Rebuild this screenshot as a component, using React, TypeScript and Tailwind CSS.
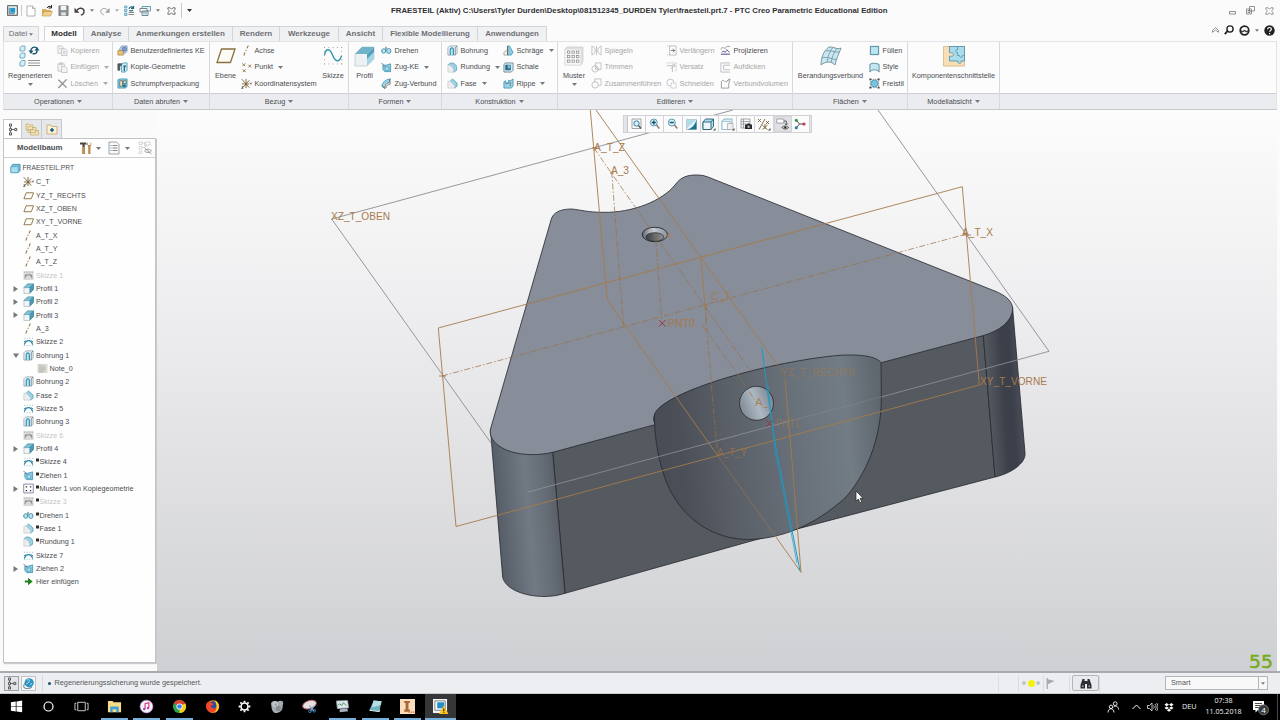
import React from "react";

const BLUE = "#2f8fb0";
const PALE = "#b9dfec";
const GREY = "#a9abae";

// small ribbon and tree glyphs, all on a 12x12 grid
const glyphs: Record<string, React.ReactNode> = {
  copy: (
    <g fill="#f4f4f4" stroke="#b9babd" strokeWidth=".8">
      <path d="M1 1h4l2 2v6H1z" />
      <path d="M5 4h4l2 2v5.500H5z" />
      <path d="M6.500 7h3M6.500 9h3M2.500 4h2" />
    </g>
  ),
  paste: (
    <g fill="#f4f4f4" stroke="#b9babd" strokeWidth=".8">
      <path d="M1 2h7v8H1zM3 .8h3V3H3z" />
      <path d="M5 5h4l2 2v4.500H5z" />
    </g>
  ),
  del: <path d="M1.500 2l9 8.500M10.500 1.500L1.500 11" stroke="#8f9193" strokeWidth="1.500" fill="none" />,
  udf: (
    <g strokeWidth=".7">
      <path d="M3 4l2-3h6v6l-2 2H3z" fill="#c4d4ea" stroke="#5f7fae" />
      <path d="M1 6h6v5H1z" fill="#e9c078" stroke="#a77d33" />
      <circle cx="8" cy="4.500" r="2.300" fill="#7f9fce" stroke="#46689b" />
    </g>
  ),
  copygeo: (
    <g strokeWidth=".8">
      <path d="M1 2h5v2H3v5H1z" fill="#555f66" stroke="#444" />
      <path d="M5 3l2-2h4v8l-2 2H5z" fill="#cfeaf4" stroke={BLUE} />
      <path d="M7 4.500h3M8 4.500V10" stroke="#17607e" strokeWidth="1.300" />
    </g>
  ),
  shrink: (
    <g strokeWidth=".8">
      <path d="M1 2l2-1h8v8l-1.500 2H1z" fill="#8fc9de" stroke={BLUE} />
      <path d="M3 3h3v6H3zM7 3h3v3H7z" fill="#f1e3b5" stroke="#4b6470" />
      <circle cx="8" cy="8.500" r="1.700" fill="#1f6f91" />
    </g>
  ),
  axis: <path d="M3 11.500l1.500-3.500M5.200 6.400l.5-1.200M6.500 3.700L8 .5" stroke="#8b6f3e" strokeWidth="1.100" fill="none" />,
  point: (
    <path
      d="M1.500 1.500l3 3M4.500 1.500l-3 3M8 3l3 3M11 3L8 6M2 8l3 3M5 8l-3 3"
      stroke="#8b6f3e"
      strokeWidth="1"
      fill="none"
    />
  ),
  csys: (
    <g stroke="#7a6338" strokeWidth="1" fill="none">
      <path d="M5.500 1v10M2 2.500l7 8M9 2.500l-7 8M1 6.500h8" />
      <path d="M.5 1l1.500 1.500M10 5l1.500 2M11.500 5L10 7M.5 9.500h2L.5 11.500h2" stroke="#3b3b3b" strokeWidth=".7" />
    </g>
  ),
  planeS: <path d="M3.500 3h8L9 9.500H1z" fill="#fdfbf5" stroke="#8b7443" strokeWidth="1" />,
  revolve: (
    <g stroke={BLUE} strokeWidth=".9">
      <path d="M0 6.500h12" strokeDasharray="2 1" />
      <ellipse cx="3" cy="6.500" rx="2.200" ry="2.500" fill={PALE} />
      <ellipse cx="8.500" cy="6.500" rx="2.300" ry="2.800" fill={PALE} />
      <path d="M5.500 2v3" stroke="#333" />
    </g>
  ),
  sweep: (
    <g strokeWidth=".8">
      <path d="M2 3.500h3.500L10.500 2v8.500H4L2 8z" fill="#8fcbe0" stroke={BLUE} />
      <path d="M4.500 5.500h4v3.500h-4z" fill="#b9e0ee" stroke="#4a9dbb" />
      <path d="M.5 1l4 4" stroke="#555" />
    </g>
  ),
  blend: (
    <g strokeWidth=".8">
      <path d="M1 9C2 4 5 1.500 10.500 1L9 5C6 5 4.500 7.500 4 11.500z" fill="#9fd3e5" stroke={BLUE} />
      <path d="M1 8l3 3.500M9 1.500L10 5" stroke="#555" />
      <path d="M4 10c1-3.500 3-5 6-5v2C7 7 6 9 5.500 11z" fill="#e3e6e8" stroke="#777" />
    </g>
  ),
  hole: (
    <g strokeWidth=".8">
      <path d="M1 3l2-2h8v8l-2 2H1z" fill="#eef6f9" stroke="#8298a2" />
      <path d="M3.500 11V5c0-2.500 3.500-2.500 3.500 0v6" fill={PALE} stroke={BLUE} strokeWidth="1.200" />
      <path d="M9 3v8M9 3l2-2" stroke="#58707b" />
    </g>
  ),
  round: (
    <g strokeWidth=".8">
      <path d="M1 3l3-2c4 0 6.500 2 6.500 5v3L7.500 11 7 8C6.500 5 4 3.500 1 3z" fill="#9ad1e4" stroke="#4a9dbb" />
      <path d="M1 3c3 .5 5.500 2 6 5l.5 3H1z" fill="#eceeef" stroke="#c6c8ca" />
    </g>
  ),
  chamfer: (
    <g strokeWidth=".8">
      <path d="M3.500 3.500L6 1l5 4.500v3.500L8 11z" fill="#9ad1e4" stroke="#4a9dbb" />
      <path d="M1 3.500h2.500L8 8v3H1z" fill="#eceeef" stroke="#c6c8ca" />
    </g>
  ),
  draft: (
    <g strokeWidth=".8">
      <path d="M5 1h2l4 7-2 3H5z" fill="#8fcbe0" stroke={BLUE} />
      <path d="M1 8l4-3v6H1z" fill="#eceeef" stroke="#999" />
      <path d="M5 1v10" stroke="#555" />
    </g>
  ),
  shell: (
    <g strokeWidth=".8">
      <path d="M1 3l1.500-2H11v8l-2 2H1z" fill="#cfeaf4" stroke="#58707b" />
      <path d="M3 3.500h5v5H3z" fill="#1f6f91" stroke="#17506a" />
      <path d="M5 3.500h3V7H5z" fill="#7fb9cf" stroke="none" />
    </g>
  ),
  rib: (
    <g strokeWidth=".8">
      <path d="M1 4l2-1v3l3-1V2.500l2 .5 3-2v7.500L9 11H1z" fill="#9ad1e4" stroke={BLUE} />
      <path d="M3 6l5-1v4" fill="none" stroke="#58707b" />
    </g>
  ),
  mirror: (
    <g fill="none" stroke="#b9babd" strokeWidth=".9">
      <path d="M1 1l3.500 3v4L1 11zM11 1L7.500 4v4l3.500 3zM6 1v10" />
    </g>
  ),
  trim: (
    <g fill="none" stroke="#b9babd" strokeWidth=".9">
      <path d="M5 1h6v7H5z" />
      <circle cx="4.500" cy="7.500" r="3.500" />
      <path d="M4 4l5 5" />
    </g>
  ),
  merge: (
    <g fill="none" stroke="#b9babd" strokeWidth=".9">
      <path d="M4 5V1h7v7H8" />
      <circle cx="4.500" cy="7.500" r="3.500" />
    </g>
  ),
  cut: (
    <g fill="none" stroke="#b9babd" strokeWidth=".9">
      <circle cx="4.800" cy="5" r="3.800" />
      <path d="M5.500 5.500H11V11H5.500z" fill="#fcfcfc" strokeDasharray="1.500 .8" />
    </g>
  ),
  extend: (
    <g fill="none" stroke="#b4b5b8" strokeWidth=".9">
      <path d="M4 1h7v10H4z" />
      <path d="M1 1h3M1 11h3" strokeDasharray="1 1" />
      <path d="M5.500 6h4M7.500 4l2 2-2 2" stroke="#666" />
    </g>
  ),
  offset: (
    <g fill="none" stroke="#b4b5b8" strokeWidth=".9">
      <path d="M1 1h10v10" strokeDasharray="1.500 1" />
      <path d="M1 4h6v7M5 7.500L9.500 3M7 3h2.500v2.500" />
    </g>
  ),
  project: (
    <g fill="none">
      <path d="M1 5c2-5 3 0 5-2s3-2 5-1" stroke="#888" strokeWidth=".9" />
      <path d="M1 10h10M2 8c2-3 3 1 4.500-1S9 6 10 8" stroke="#43347c" strokeWidth="1" />
      <path d="M6 4l3 3" stroke="#666" strokeWidth=".7" />
    </g>
  ),
  thicken: (
    <g fill="none" stroke="#b4b5b8" strokeWidth=".9">
      <path d="M11 1H1v10h10M11 3.500H4v5h7" />
    </g>
  ),
  solidify: (
    <g fill="none" stroke="#8f9194" strokeWidth=".9">
      <path d="M1.500 4C3 .5 5 5 7 4s2-3 4-2.500L9.500 6v5h-8z" />
      <path d="M7 4l3.500-3" />
    </g>
  ),
  fill: (
    <g>
      <path d="M1.500 1.500h9v9h-9z" fill="#a5dcec" stroke="#4b7f92" strokeWidth="1" />
      <path d="M3.500 2v8M5.500 2v8M7.500 2v8M2 4h8M2 6h8M2 8h8" stroke="#d8f2f9" strokeWidth=".5" />
    </g>
  ),
  style: <path d="M1 2.500c3-2 7-1 10 0V11C9.500 9 8.500 8.500 6 8.500S2.500 9 1 11z" fill="#c5e6f1" stroke="#4b7f92" strokeWidth=".9" />,
  freestyle: (
    <g>
      <path d="M1.500 1.500h9v9h-9z" fill="none" stroke="#555" strokeWidth=".7" strokeDasharray="1.500 1" />
      <circle cx="6" cy="6" r="3.800" fill="#7cc4dc" stroke={BLUE} strokeWidth=".8" />
      <path d="M.5.5h2v2h-2zM9.500.5h2v2h-2zM.5 9.500h2v2h-2zM9.500 9.500h2v2h-2z" fill="#444" />
    </g>
  ),
  part: (
    <g strokeWidth=".8">
      <path d="M1 4l2-2.500h8v6.500L9 10.500H1z" fill="#72c1dd" stroke="#2a7e9f" />
      <path d="M1 4h8v6.500H1z" fill="#a9deee" stroke="#5aa9c6" />
    </g>
  ),
  sketch: (
    <g>
      <path d="M1.500 9.500C3 3.500 9 3.500 10.500 9.500" fill="none" stroke="#2b86a8" strokeWidth="1.400" />
      <path d="M1 2.500h1M4 2.500h1M7 2.500h1M10 2.500h1M1 10.500h1M4 10.500h1M7 10.500h1M10 10.500h1" stroke="#7fb4c8" strokeWidth="1" />
      <path d="M3 5L1 6.500M9 5l2 1.500" stroke="#2b86a8" />
    </g>
  ),
  sketchOff: (
    <g>
      <path d="M.5 1h11v10H.5z" fill="#dadad8" />
      <path d="M2 9C3 4 9 4 10 9M3.500 5L2 6.500M8.500 5L10 6.500" fill="none" stroke="#8e8e8c" strokeWidth="1.200" />
      <path d="M1 2.500h1M4 2.500h1M7 2.500h1M10 2.500h1" stroke="#aaa" />
    </g>
  ),
  extrude: (
    <g strokeWidth=".7">
      <path d="M1 5l4-4h6.500v6l-4 4.500H1z" fill="#f0f4f5" stroke="#a3afb4" />
      <path d="M1 5l4-4h6.500l-4 4z" fill="#7dbfd4" stroke="#4f9ab4" />
      <path d="M7.500 5l4-4v6l-4 4z" fill="#4b9ab8" stroke="#3a819e" />
    </g>
  ),
  note: (
    <g>
      <path d="M.5 1h11v10H.5z" fill="#dadad4" />
      <path d="M2 3h3M6 3.500h2M2 5.500h7M2 7.500h7M2 9.500h5" stroke="#a5a59a" strokeWidth=".8" />
    </g>
  ),
  pattern: (
    <g>
      <path d="M.8 1.200h10.400v9.600H.8z" fill="#fff" stroke="#6d5a8a" strokeWidth=".8" />
      <path d="M3 3.500h1.500V5H3zM7.500 3.500H9V5H7.500zM3 7.500h1.500V9H3zM7.500 7.500H9V9H7.500z" fill="#333" />
    </g>
  ),
  insert: <path d="M2 4.800h3.500V2l5 4-5 4V7.200H2z" fill="#1d7f1a" />,
};

function Glyph({ name, size = 11 }: { name: string; size?: number }) {
  return (
    <svg width={size} height={size} viewBox="0 0 12 12" className="shrink-0">
      {glyphs[name]}
    </svg>
  );
}

function Caret({ color = "#77797c", size = 5 }: { color?: string; size?: number }) {
  return (
    <svg width={size} height="3" viewBox="0 0 5 3" className="shrink-0">
      <path d="M0 0h5L2.500 3z" fill={color} />
    </svg>
  );
}

type Cmd = { icon: string; text: string; caret?: boolean; off?: boolean };

function CmdColumn({ items, className }: { items: Cmd[]; className: string }) {
  return (
    <div className={`flex shrink-0 flex-col ${className}`}>
      {items.map((c) => (
        <div key={c.text} className="flex h-[16.7px] items-center">
          <Glyph name={c.icon} />
          <span className={`ml-[2.5px] ${c.off ? "text-[#a5a6a9]" : "text-[#4a4c50]"}`}>{c.text}</span>
          {c.caret && (
            <span className="ml-[5px] flex">
              <Caret color={c.off ? GREY : "#77797c"} />
            </span>
          )}
        </div>
      ))}
    </div>
  );
}

function BigCmd({ text, icon, caret, className }: { text: string; icon: React.ReactNode; caret?: boolean; className: string }) {
  return (
    <div className={`flex shrink-0 flex-col items-center ${className}`}>
      <div className="mt-[2px] flex h-[24px] items-center justify-center">{icon}</div>
      <div className="mt-[3px] h-[10px] leading-[10px]">{text}</div>
      {caret && <div className="mt-[2px] flex"><Caret /></div>}
    </div>
  );
}

function Group({ label, className, children }: { label: string; className: string; children: React.ReactNode }) {
  return (
    <div className={`flex shrink-0 flex-col border-r border-[#d8d9dc] ${className}`}>
      <div className="flex h-[51px]">{children}</div>
      <div className="flex h-[16px] items-center justify-center gap-[3px] border-t border-[#cdced1] bg-[#ebecf0]">
        <span>{label}</span>
        <Caret />
      </div>
    </div>
  );
}

function TitleBar() {
  return (
    <div className="flex h-[26px] shrink-0 items-start">
      <div className="flex h-[21px] w-[391px] shrink-0 items-center">
        <span className="flex w-[22px] justify-center border-r border-[#c9c9cb] pl-[4px]">
          <svg width="11" height="11" viewBox="0 0 12 12">
            <path d="M.8.8h10.400v10.400H.8z" fill="#fff" stroke="#444" strokeWidth="1.100" />
            <path d="M3.500 3h5.500v5.500H3.500z" fill="#2497c9" />
            <path d="M2.500 3v6.500h6" fill="none" stroke="#1a4b66" strokeWidth=".8" />
          </svg>
        </span>
        <span className="flex w-[17px] justify-center">
          <svg width="10" height="12" viewBox="0 0 10 12">
            <path d="M1 1h5.500L9 3.500V11H1z" fill="#fff" stroke="#a0a1a3" strokeWidth=".8" />
            <path d="M6.500 1v2.500H9" fill="none" stroke="#a0a1a3" strokeWidth=".8" />
          </svg>
        </span>
        <span className="flex w-[16px] justify-center">
          <svg width="12" height="12" viewBox="0 0 12 12">
            <path d="M1 4h4l1 1h4v6H1z" fill="#d9ab5c" />
            <path d="M3 6.500h8.500L9.500 11H1z" fill="#f1d193" stroke="#c39444" strokeWidth=".6" />
            <path d="M6 3c1-2 3-2 4-1M10.500 0v3h-3" fill="none" stroke="#222" strokeWidth="1" />
          </svg>
        </span>
        <span className="flex w-[16px] justify-center">
          <svg width="11" height="11" viewBox="0 0 12 12">
            <path d="M1 1h10v10.500H1z" fill="#8d9295" stroke="#666a6d" strokeWidth=".8" />
            <path d="M3 1h6v4.500H3z" fill="#f6f6f6" />
            <path d="M3.500 8h5v3.500h-5z" fill="#e1e2e3" />
          </svg>
        </span>
        <span className="flex w-[16px] justify-center">
          <svg width="11" height="10" viewBox="0 0 12 11">
            <path d="M3 5c2-4 8-3 8 1 0 2-1.500 3.500-3.500 4" fill="none" stroke="#444" strokeWidth="1.500" />
            <path d="M.5 2v5.500H6z" fill="#444" />
          </svg>
        </span>
        <span className="flex w-[10px] justify-center"><Caret size={4} /></span>
        <span className="flex w-[16px] justify-center">
          <svg width="10" height="10" viewBox="0 0 12 11">
            <path d="M9 5C7 1 1 2 1 6c0 2 1.500 3.500 3.500 4" fill="none" stroke="#999b9d" strokeWidth="1.200" />
            <path d="M11.500 2v5.500H6z" fill="#999b9d" />
          </svg>
        </span>
        <span className="flex w-[8px] justify-center"><Caret size={4} color={GREY} /></span>
        <span className="flex w-[16px] justify-center">
          <svg width="12" height="12" viewBox="0 0 12 12">
            <path d="M1.500 1h2.500v2H1.500zM1.500 4.500H4v2H1.500zM1.500 8H4v2.500H1.500z" fill="#a6d6e6" stroke="#5b9db5" strokeWidth=".7" />
            <path d="M5.500 7.500H11M5.500 9.500H11" stroke="#888" />
            <path d="M6 4c.5-2.500 3-2.500 4-1M10.500 1v2.500H8M10 5C9 6.500 7 6 6.500 5" fill="none" stroke="#21627e" strokeWidth="1.200" />
          </svg>
        </span>
        <span className="flex w-[16px] justify-center">
          <svg width="12" height="12" viewBox="0 0 12 12">
            <path d="M3 1.500h8.500V6H3z" fill="#e8f4f8" stroke="#5e97ab" strokeWidth=".9" />
            <path d="M1 3.500h7v3.500H1zM3 6h6v4.500H3z" fill="#fdfdfd" stroke="#6a7b83" strokeWidth=".9" />
            <path d="M4 7.500h4v2H4z" fill="#9ed0e1" />
          </svg>
        </span>
        <span className="flex w-[10px] justify-center"><Caret size={4} /></span>
        <span className="flex w-[17px] justify-center">
          <svg width="9" height="8" viewBox="0 0 10 10" preserveAspectRatio="none">
            <path d="M1 1h2.500L5 2.800 6.500 1H9v2L7.200 5 9 7v2H6.500L5 7.200 3.500 9H1V7l1.800-2L1 3z" fill="#fff" stroke="#444" strokeWidth=".9" />
          </svg>
        </span>
        <span className="ml-[1px] flex h-[15px] w-[16px] items-center justify-center border-l border-[#c9c9cb]"><Caret color="#333" /></span>
      </div>
      <div className="h-[21px] w-[497px] shrink-0 text-[7.8px] leading-[21px] font-bold whitespace-nowrap text-[#2f3033]">
        FRAESTEIL (Aktiv) C:\Users\Tyler Durden\Desktop\081512345_DURDEN Tyler\fraesteil.prt.7 - PTC Creo Parametric Educational Edition
      </div>
      <div className="ml-auto flex h-[21px] items-center gap-[10px] pr-[6px]">
        <svg width="7" height="9" viewBox="0 0 7 9">
          <path d="M.5 5.500h6v2.500h-6z" fill="none" stroke="#777" strokeWidth=".8" />
        </svg>
        <svg width="9" height="9" viewBox="0 0 9 9">
          <path d="M3.500.5h5v4.500h-5zM.5 3h5v5h-5zM2 4.500h2v2H2z" fill="#fff" stroke="#777" strokeWidth=".8" />
        </svg>
        <svg width="9" height="8" viewBox="0 0 10 10" preserveAspectRatio="none">
          <path d="M1 1h2.500L5 2.800 6.500 1H9v2L7.200 5 9 7v2H6.500L5 7.200 3.500 9H1V7l1.800-2L1 3z" fill="#fff" stroke="#666" strokeWidth=".8" />
        </svg>
      </div>
    </div>
  );
}

function TabRow() {
  const tab = "flex h-[15px] shrink-0 items-center justify-center border-t border-r border-[#d3d4d7] bg-[#f0f1f3] text-[#6e7074]";
  return (
    <div className="flex h-[15px] shrink-0 pl-[3px] text-[8px] leading-none font-bold whitespace-nowrap">
      <div className={`${tab} w-[36px] gap-[2px] border-l bg-[#e4e5e8] font-normal`}>
        <span>Datei</span>
        <Caret size={4} />
      </div>
      <div className="ml-[5px] flex h-[17px] w-[40px] shrink-0 items-center justify-center border-x border-t border-[#d3d4d7] bg-[#fdfdfd] pb-[2px] text-[#2a2b2e]">
        Modell
      </div>
      <div className={`${tab} w-[45px]`}>Analyse</div>
      <div className={`${tab} w-[104px]`}>Anmerkungen erstellen</div>
      <div className={`${tab} w-[47px]`}>Rendern</div>
      <div className={`${tab} w-[59px]`}>Werkzeuge</div>
      <div className={`${tab} w-[44px]`}>Ansicht</div>
      <div className={`${tab} w-[95px] text-[7.8px]`}>Flexible Modellierung</div>
      <div className={`${tab} w-[69px] text-[7.8px]`}>Anwendungen</div>
      <div className="ml-auto flex h-[8px] items-center gap-[5px] pr-[5px]">
        <svg width="7" height="6" viewBox="0 0 7 6">
          <path d="M.5 3.500l3-3 3 3v1.800L3.500 3 .5 5.300z" fill="#fff" stroke="#666" strokeWidth=".7" />
        </svg>
        <svg width="10" height="10" viewBox="0 0 10 10">
          <circle cx="6" cy="4" r="3.100" fill="none" stroke="#222" strokeWidth="1.400" />
          <path d="M3.500 6.200L.8 9.200" stroke="#222" strokeWidth="1.800" />
        </svg>
        <svg width="11" height="11" viewBox="0 0 11 11">
          <circle cx="5.500" cy="5.500" r="4.300" fill="none" stroke="#222" strokeWidth="1.700" />
          <path d="M1.500 5.500l2 1.300 2-1.300 2 1.300 2-1.300" fill="none" stroke="#333" strokeWidth="1.300" />
        </svg>
        <Caret size={4} />
        <svg width="11" height="11" viewBox="0 0 11 11">
          <circle cx="5.500" cy="5.500" r="5.200" fill="#222" />
          <path d="M3.700 4.200c0-2.300 3.700-2.300 3.700 0 0 1.200-1.800 1.300-1.800 2.600M5.600 8v1.200" fill="none" stroke="#fff" strokeWidth="1.200" />
        </svg>
      </div>
    </div>
  );
}

const dots = [0, 1, 2, 3, 4];

function Ribbon() {
  return (
    <div className="mx-[3px] flex h-[69px] shrink-0 border-[#e2e3e5] border-t border-x border-b border-b-[#c8c9cc] bg-[#fcfcfc] text-[7.25px] leading-none whitespace-nowrap text-[#4a4c50]">
      <Group label="Operationen" className="w-[109px]">
        <BigCmd
          className="w-[52px]"
          text="Regenerieren"
          caret
          icon={
            <svg width="22" height="22" viewBox="0 0 22 22">
              <g fill="#d3eef6" stroke="#5b9db5" strokeWidth=".8">
                <path d="M1 2.500L2.500 1H6v4L5 6H1zM1 9.500L2.500 8H6v4L5 13H1zM1 17l1.500-1.500H6v4L5 21H1z" />
              </g>
              <path d="M9 15.500h12M9 18h12M9 20.500h12" stroke="#888" strokeWidth=".9" />
              <path d="M12 6c-.5-3 3-5 6-3M17.500 4.500c1.500 3-1 5-4 4" fill="none" stroke="#1d5b78" strokeWidth="1.400" />
              <path d="M9.500 5.500h5L12 9zM15.500 5.500h5L18 2z" fill="#1d5b78" />
            </svg>
          }
        />
        <CmdColumn
          className="w-[56px] pl-[1px]"
          items={[
            { icon: "copy", text: "Kopieren", off: true },
            { icon: "paste", text: "Einfügen", caret: true, off: true },
            { icon: "del", text: "Löschen", caret: true, off: true },
          ]}
        />
      </Group>
      <Group label="Daten abrufen" className="w-[97px]">
        <CmdColumn
          className="pl-[4px]"
          items={[
            { icon: "udf", text: "Benutzerdefiniertes KE" },
            { icon: "copygeo", text: "Kopie-Geometrie" },
            { icon: "shrink", text: "Schrumpfverpackung" },
          ]}
        />
      </Group>
      <Group label="Bezug" className="w-[139px]">
        <BigCmd
          className="w-[31px]"
          text="Ebene"
          icon={
            <svg width="20" height="18" viewBox="0 0 20 18">
              <path d="M5.500 2H19l-4.500 13.500H1z" fill="#fdfbf5" stroke="#8b6f3e" strokeWidth="1.300" />
            </svg>
          }
        />
        <CmdColumn
          className="w-[79px]"
          items={[
            { icon: "axis", text: "Achse" },
            { icon: "point", text: "Punkt", caret: true },
            { icon: "csys", text: "Koordinatensystem" },
          ]}
        />
        <BigCmd
          className="w-[26px]"
          text="Skizze"
          icon={
            <svg width="20" height="20" viewBox="0 0 20 20">
              {dots.map((i) => (
                <g key={i} fill="#999">
                  <rect x={1 + i * 4.300} y="1" width=".9" height=".9" />
                  <rect x={1 + i * 4.300} y="17.500" width=".9" height=".9" />
                  <rect x="1" y={1 + i * 4.100} width=".9" height=".9" />
                  <rect x="18.200" y={1 + i * 4.100} width=".9" height=".9" />
                </g>
              ))}
              <path d="M1.500 9C3 1.500 7 2.500 9.500 9s6.500 8.500 9 1" fill="none" stroke="#2f8fb0" strokeWidth="1.300" />
            </svg>
          }
        />
      </Group>
      <Group label="Formen" className="w-[93px]">
        <BigCmd
          className="w-[31px]"
          text="Profil"
          icon={
            <svg width="21" height="21" viewBox="0 0 21 21">
              <path d="M1 8l7-7h12v12l-7 7H1z" fill="#eef1f2" stroke="#b9c0c3" strokeWidth=".7" />
              <path d="M1 8l7-7h12l-7 7z" fill="#71b4ca" />
              <path d="M13 8l7-7v12l-7 7z" fill="#a5d6e6" />
              <path d="M13 8l7-7v5l-7 7z" fill="#55a0bb" />
            </svg>
          }
        />
        <CmdColumn
          className="pl-[1px]"
          items={[
            { icon: "revolve", text: "Drehen" },
            { icon: "sweep", text: "Zug-KE", caret: true },
            { icon: "blend", text: "Zug-Verbund" },
          ]}
        />
      </Group>
      <Group label="Konstruktion" className="w-[116px]">
        <CmdColumn
          className="w-[61px] pl-[5px]"
          items={[
            { icon: "hole", text: "Bohrung" },
            { icon: "round", text: "Rundung", caret: true },
            { icon: "chamfer", text: "Fase", caret: true },
          ]}
        />
        <CmdColumn
          className=""
          items={[
            { icon: "draft", text: "Schräge", caret: true },
            { icon: "shell", text: "Schale" },
            { icon: "rib", text: "Rippe", caret: true },
          ]}
        />
      </Group>
      <Group label="Editieren" className="w-[235px]">
        <BigCmd
          className="w-[32px]"
          text="Muster"
          caret
          icon={
            <svg width="20" height="20" viewBox="0 0 20 20">
              <path d="M1 3l2-2h16v15l-2 3H1z" fill="#e1e2e4" stroke="#c1c2c5" strokeWidth=".6" />
              <path d="M1 3h16v16H1z" fill="#f5f5f6" stroke="#d0d1d3" strokeWidth=".5" />
              {[0, 1, 2].map((r) =>
                [0, 1, 2].map((c) => (
                  <rect key={`${r}${c}`} x={3.500 + c * 4.500} y={5 + r * 4.500} width="2.400" height="2.200" fill="#fff" stroke="#85878a" strokeWidth=".7" />
                ))
              )}
            </svg>
          }
        />
        <CmdColumn
          className="w-[76px] pl-[1px]"
          items={[
            { icon: "mirror", text: "Spiegeln", off: true },
            { icon: "trim", text: "Trimmen", off: true },
            { icon: "merge", text: "Zusammenführen", off: true },
          ]}
        />
        <CmdColumn
          className="w-[54px]"
          items={[
            { icon: "extend", text: "Verlängern", off: true },
            { icon: "offset", text: "Versatz", off: true },
            { icon: "cut", text: "Schneiden", off: true },
          ]}
        />
        <CmdColumn
          className=""
          items={[
            { icon: "project", text: "Projizieren" },
            { icon: "thicken", text: "Aufdicken", off: true },
            { icon: "solidify", text: "Verbundvolumen", off: true },
          ]}
        />
      </Group>
      <Group label="Flächen" className="w-[115px]">
        <BigCmd
          className="w-[75px]"
          text="Berandungsverbund"
          icon={
            <svg width="22" height="21" viewBox="0 0 22 21">
              <path d="M1 19C1 13 3 5 9 1c5-.5 8 3 12 1-2 6-5 11-6 17-4-4-9-4-14 0z" fill="#c8e7f1" stroke="#6f8f9b" strokeWidth=".9" />
              <path d="M5.500 5c5-1.500 9 2 14 1M2 12c5-2 10 1.500 14.500 1.500M13 1.500C9 6 8 11 7 16.500M17 2.500C13 7 12 12 11 17" fill="none" stroke="#6f8f9b" strokeWidth=".8" />
            </svg>
          }
        />
        <CmdColumn
          className="pl-[1px]"
          items={[
            { icon: "fill", text: "Füllen" },
            { icon: "style", text: "Style" },
            { icon: "freestyle", text: "Freistil" },
          ]}
        />
      </Group>
      <Group label="Modellabsicht" className="w-[92px]">
        <BigCmd
          className="w-[91px]"
          text="Komponentenschnittstelle"
          icon={
            <svg width="22" height="21" viewBox="0 0 22 21">
              <path d="M.5.5h21v19.500H.5z" fill="#f8dfb8" stroke="#d5b27c" strokeWidth=".8" />
              <path
                d="M6.500.5h15V15h-3.500c1.500 3-4.500 3-3 0H6.500v-4.500c-.5-1 4 1 4-2s-4.500-1-4-2z"
                fill="#a9dcec"
                stroke="#5b93a9"
                strokeWidth=".9"
              />
              <path d="M14.500.5v3.500c-2.500-1-2.500 3.500 0 2.500v3h2c-.5 2.500 3.500 2.500 3 0h2" fill="none" stroke="#5b93a9" strokeWidth=".8" />
            </svg>
          }
        />
      </Group>
      <div className="flex flex-1 flex-col">
        <div className="h-[51px]" />
        <div className="h-[16px] border-t border-[#cdced1] bg-[#ebecf0]" />
      </div>
    </div>
  );
}

type Node = { icon: string; text: string; arrow?: "open" | "closed"; off?: boolean; mark?: boolean; deep?: boolean };

const nodes: Node[] = [
  { icon: "csys", text: "C_T" },
  { icon: "planeS", text: "YZ_T_RECHTS" },
  { icon: "planeS", text: "XZ_T_OBEN" },
  { icon: "planeS", text: "XY_T_VORNE" },
  { icon: "axis", text: "A_T_X" },
  { icon: "axis", text: "A_T_Y" },
  { icon: "axis", text: "A_T_Z" },
  { icon: "sketchOff", text: "Skizze 1", off: true },
  { icon: "extrude", text: "Profil 1", arrow: "closed" },
  { icon: "extrude", text: "Profil 2", arrow: "closed" },
  { icon: "extrude", text: "Profil 3", arrow: "closed" },
  { icon: "axis", text: "A_3" },
  { icon: "sketch", text: "Skizze 2" },
  { icon: "hole", text: "Bohrung 1", arrow: "open" },
  { icon: "note", text: "Note_0", deep: true },
  { icon: "hole", text: "Bohrung 2" },
  { icon: "chamfer", text: "Fase 2" },
  { icon: "sketch", text: "Skizze 5" },
  { icon: "hole", text: "Bohrung 3" },
  { icon: "sketchOff", text: "Skizze 6", off: true },
  { icon: "extrude", text: "Profil 4", arrow: "closed" },
  { icon: "sketch", text: "Skizze 4", mark: true },
  { icon: "sweep", text: "Ziehen 1", mark: true },
  { icon: "pattern", text: "Muster 1 von Kopiegeometrie", arrow: "closed", mark: true },
  { icon: "sketchOff", text: "Skizze 3", off: true, mark: true },
  { icon: "revolve", text: "Drehen 1", mark: true },
  { icon: "chamfer", text: "Fase 1", mark: true },
  { icon: "round", text: "Rundung 1", mark: true },
  { icon: "sketch", text: "Skizze 7" },
  { icon: "sweep", text: "Ziehen 2", arrow: "closed" },
  { icon: "insert", text: "Hier einfügen" },
];

function TreeGlyph() {
  return (
    <svg width="10" height="13" viewBox="0 0 10 13">
      <path
        d="M1.500 1h2v2.200h-2zM1.500 5.400h2v2.200h-2zM1.500 9.800h2V12h-2zM6.800 5.400h2v2.200h-2zM2.500 3.700v1.200M2.500 8.100v1.200M4 6.500h2.300"
        fill="none"
        stroke="#4a4a4c"
        strokeWidth=".9"
      />
    </svg>
  );
}

function ModelTree() {
  return (
    <div className="flex w-[157px] shrink-0 flex-col bg-[#fafafa] pt-[9px] pl-[3px]">
      <div className="flex h-[19px]">
        <div className="flex w-[19px] items-center justify-center border-x border-t border-[#c8c9cc] bg-white"><TreeGlyph /></div>
        <div className="flex w-[20px] items-center justify-center border-t border-r border-[#c8c9cc] bg-[#e6e7eb]">
          <svg width="14" height="13" viewBox="0 0 14 13">
            <g fill="#f5e6bd" stroke="#c0a566" strokeWidth=".7">
              <path d="M1 1h3l1 1h3v5H1zM3 3.500h3l1 1h4v5H3zM5.500 6.500h3l1 1h4V12h-8z" />
            </g>
          </svg>
        </div>
        <div className="flex w-[20px] items-center justify-center border-t border-r border-[#c8c9cc] bg-[#e6e7eb]">
          <svg width="12" height="11" viewBox="0 0 12 11">
            <path d="M1 1h4l1 1.500h5V10H1z" fill="#fbf2d6" stroke="#c0a566" strokeWidth=".8" />
            <path d="M6 4v4M4 6h4" stroke="#1d5b78" strokeWidth="1.500" />
          </svg>
        </div>
      </div>
      <div className="flex h-[525px] w-[153px] flex-col border border-[#c3c4c8] bg-[#fefefe] shadow-[1px_1px_1px_#c9cacd]">
        <div className="flex h-[19px] shrink-0 items-center border-b border-[#cfd0d3] pl-[13px]">
          <span className="w-[62px] text-[7.800px] font-bold text-[#4d4e51]">Modellbaum</span>
          <svg width="13" height="14" viewBox="0 0 13 14">
            <path d="M1 1.500h6l1 2H1zM3.500 3.500h2.200V13H3.500z" fill="#4b4540" />
            <path d="M3.500 6h2.200v7H3.500z" fill="#c69347" />
            <path d="M9 1v3h2.500V1l1 2-1 2.500V13H9.200V5.500L8 3z" fill="#b98a4a" />
          </svg>
          <span className="ml-[4px] flex"><Caret /></span>
          <svg width="12" height="14" viewBox="0 0 12 14" className="ml-[7px]">
            <path d="M1 1h7.500L11 3.500V13H1z" fill="#fbfbfb" stroke="#8b8d90" strokeWidth=".8" />
            <path d="M2.500 4.500h1M2.500 7h1M2.500 9.500h1" stroke="#5a82a0" strokeWidth="1.200" />
            <path d="M4.500 4.500h5M4.500 7h5M4.500 9.500h5" stroke="#77797c" strokeWidth=".9" />
          </svg>
          <span className="ml-[5px] flex"><Caret /></span>
          <svg width="15" height="14" viewBox="0 0 15 14" className="ml-[8px]">
            <path d="M1 1h3v2.500H1zM1 5.500h3V8H1zM1 10h3v2.500H1zM4 2h3v4.500H4M7 1h5v3H7zM7 5h3" fill="none" stroke="#bcbdc0" strokeWidth=".8" strokeDasharray="1.500 .7" />
            <path d="M6.500 10c1.500-2.500 5.500-2.500 7 0-1.500 2-5.500 2-7 0zM6.500 7l7 6" fill="none" stroke="#97989b" strokeWidth=".9" />
          </svg>
        </div>
        <div className="flex flex-col pt-[4px] text-[7.2px] leading-none whitespace-nowrap text-[#4c4d50]">
          <div className="flex h-[13.34px] items-center pl-[6px]">
            <Glyph name="part" />
            <span className="ml-[1.500px] text-[6.700px]">FRAESTEIL.PRT</span>
          </div>
          {nodes.map((n, i) => (
            <div key={i} className="flex h-[13.34px] items-center">
              <span className={`flex shrink-0 items-center pl-[9px] ${n.deep ? "w-[32.500px]" : "w-[19px]"}`}>
                {n.arrow === "closed" && (
                  <svg width="5" height="6" viewBox="0 0 5 6"><path d="M.5 0v6L5 3z" fill="#77797c" /></svg>
                )}
                {n.arrow === "open" && (
                  <svg width="6" height="5" viewBox="0 0 6 5"><path d="M0 .5h6L3 5z" fill="#77797c" /></svg>
                )}
              </span>
              <Glyph name={n.icon} />
              {n.mark && <span className="ml-[2px] h-[3px] w-[3px] shrink-0 -translate-y-[1.500px] bg-[#2c2c2e]" />}
              <span className={`${n.mark ? "ml-[.5px]" : "ml-[2px]"} ${n.off ? "text-[#c3c4c6]" : ""} ${n.text.includes("_T_") ? "text-[7px]" : ""}`}>
                {n.text}
              </span>
            </div>
          ))}
        </div>
      </div>
    </div>
  );
}

function Scene() {
  return (
    <svg width="1120" height="561" viewBox="157 110 1120 561" className="block">
      <defs>
        <linearGradient id="bg" x1="0" y1="0" x2="0" y2="1">
          <stop offset="0" stopColor="#fcfcfc" />
          <stop offset=".35" stopColor="#eeeef0" />
          <stop offset="1" stopColor="#cfd0d3" />
        </linearGradient>
        <linearGradient id="left" gradientUnits="userSpaceOnUse" x1="492" y1="500" x2="562" y2="494">
          <stop offset="0" stopColor="#525b64" />
          <stop offset=".5" stopColor="#717a84" />
          <stop offset=".75" stopColor="#656d76" />
          <stop offset="1" stopColor="#565a62" />
        </linearGradient>
        <linearGradient id="right" gradientUnits="userSpaceOnUse" x1="988" y1="400" x2="1020" y2="398">
          <stop offset="0" stopColor="#555a61" />
          <stop offset=".5" stopColor="#3b404a" />
          <stop offset=".75" stopColor="#3a3f49" />
          <stop offset="1" stopColor="#474c56" />
        </linearGradient>
        <linearGradient id="pocket" gradientUnits="userSpaceOnUse" x1="655" y1="455" x2="882" y2="432">
          <stop offset="0" stopColor="#474c55" />
          <stop offset=".12" stopColor="#4b5058" />
          <stop offset=".32" stopColor="#5a5f67" />
          <stop offset=".7" stopColor="#6c757e" />
          <stop offset=".85" stopColor="#727c85" />
          <stop offset="1" stopColor="#5f676f" />
        </linearGradient>
        <linearGradient id="bore" x1="0" y1=".7" x2="1" y2=".3">
          <stop offset="0" stopColor="#7d8792" />
          <stop offset=".5" stopColor="#aeb8c2" />
          <stop offset="1" stopColor="#79838d" />
        </linearGradient>
        <linearGradient id="rim" x1="0" y1="0" x2="1" y2="0">
          <stop offset="0" stopColor="#5d646e" />
          <stop offset=".4" stopColor="#c8ced4" />
          <stop offset="1" stopColor="#8b929a" />
        </linearGradient>
        <linearGradient id="shaft" x1="0" y1="0" x2="1" y2="0">
          <stop offset="0" stopColor="#3a3f47" />
          <stop offset=".6" stopColor="#6f6f6f" />
          <stop offset="1" stopColor="#8c939b" />
        </linearGradient>
      </defs>
      <rect x="157" y="110" width="1120" height="561" fill="url(#bg)" />

      {/* solid body */}
      <g stroke="#24272d" strokeWidth=".8" strokeLinejoin="round">
        <path d="M552.700 452L660 400 881 350 983.300 335.500 995 477 755 540 565 593.300z" fill="#555960" />
        <path d="M490.500 430L502.700 577.300C505 588 522 596.500 545 596.500Q556 596.500 565 593.300L552.700 452 520 440z" fill="url(#left)" />
        <path d="M983.300 335.500L995 477C1012 473 1026 463 1025 453L1012.500 307 998 320z" fill="url(#right)" />
        <path
          d="M654.500 424C655.500 440 658 460 666 481C680 517 712 540 750 539.500C790 538 822 519 846 497C872 467 881 430 881.300 400L881 355 820 345 700 372 654 404z"
          fill="url(#pocket)"
        />
        <path
          d="M490.500 429L551 220C553 212.500 560 209 571.700 209C582 210 587 212.300 603 212.300C632 213 662 201 675 185C681 176.500 688 174.800 698 175Q703 175 708 177L996 291.500C1006 296 1012.500 301 1012.700 309C1012 321 1000 331 981.700 336L881.300 362.700C876 356.500 862 354 840 355.300C772 361 668 390 655 413Q652 419 655 424.700L552.700 452.300C530 457.500 505 454 494 441.500Q489 435 490.500 429z"
          fill="#878d99"
        />
      </g>
      <circle cx="756.500" cy="403.300" r="17" fill="url(#bore)" stroke="#24272d" strokeWidth=".8" />
      <ellipse cx="654.800" cy="234.500" rx="12.700" ry="7.200" fill="url(#rim)" stroke="#24272d" strokeWidth=".9" />
      <ellipse cx="654.800" cy="237" rx="9" ry="4.300" fill="url(#shaft)" stroke="#24272d" strokeWidth=".7" />

      {/* datum plane XZ */}
      <g fill="none" stroke="#8b8d92" strokeWidth=".9">
        <path d="M733 110L331.700 219 491 443" />
        <path d="M878 110L1049 351.300 881 397" />
        <path d="M881 397L790 421" stroke="#989ba0" strokeWidth=".5" opacity=".5" />
        <path d="M790 421L528 492" stroke="#989ba0" strokeWidth=".7" />
      </g>

      {/* datum planes XY and YZ */}
      <g fill="none" stroke="#a67a4b" strokeWidth=".9">
        <path d="M438.300 328L962.300 186.700 979.300 385 456 526.500z" />
        <path d="M590.300 110L607.300 300 718 456" />
        <path d="M718 456L776 537" opacity=".6" />
        <path d="M776 537L801 572.300 790 437 785 380" />
        <path d="M596 110L776.700 364" />
        <path d="M700.700 256.700L705 305" />
      </g>

      {/* axes */}
      <g fill="none" stroke="#9c7142" strokeWidth=".8" strokeDasharray="6 2 1.500 2" opacity=".9">
        <path d="M442 376L966.700 234" />
        <path d="M594 148L612 174 749 369" />
        <path d="M611.700 172L623.500 326" />
        <path d="M656 240L661.700 320" />
        <path d="M705 305L712 392 717.700 455" />
        <path d="M703 326L736.700 373 757 403" />
        <path d="M706 304V326" />
        <path d="M777 364l8 15" />
      </g>
      <g fill="none" stroke="#1d9ac6" strokeWidth="1">
        <path d="M761.700 347L769 403 776 448 800 571" />
        <path d="M768 385L775 450 797 563" strokeWidth=".7" />
      </g>
      <path d="M659 320l6.500 6.500M665.500 320l-6.500 6.500M766.500 420.500l6 6M772.500 420.500l-6 6" stroke="#a2262c" strokeWidth=".9" />
      <path d="M439 376h7M703 305h5M963 235h8M592 148h6M610 173h4" stroke="#a67a4b" strokeWidth=".9" />

      <g fill="#a8794a" fontFamily="'Liberation Sans', sans-serif" fontSize="10.400">
        <text x="331" y="219.500" textLength="59" lengthAdjust="spacingAndGlyphs">XZ_T_OBEN</text>
        <text x="594" y="150.500" textLength="31" lengthAdjust="spacingAndGlyphs">A_T_Z</text>
        <text x="611" y="173.500" textLength="18" lengthAdjust="spacingAndGlyphs">A_3</text>
        <text x="962" y="235.500" textLength="31" lengthAdjust="spacingAndGlyphs">A_T_X</text>
        <text x="980" y="385" textLength="67" lengthAdjust="spacingAndGlyphs">XY_T_VORNE</text>
        <text x="668" y="326.500" textLength="27" lengthAdjust="spacingAndGlyphs">PNT0</text>
        <text x="711" y="300" textLength="20" lengthAdjust="spacingAndGlyphs" opacity=".8">C_T</text>
        <text x="666" y="238" fontSize="9">4</text>
        <text x="781" y="375.500" textLength="74" lengthAdjust="spacingAndGlyphs" opacity=".55">YZ_T_RECHTS</text>
        <text x="755" y="406" textLength="14" lengthAdjust="spacingAndGlyphs" opacity=".8">A_</text>
        <text x="776" y="426.500" textLength="24" lengthAdjust="spacingAndGlyphs" opacity=".5">PNT1</text>
        <text x="717" y="455.500" textLength="30" lengthAdjust="spacingAndGlyphs" opacity=".6">A_T_Y</text>
      </g>
      <path d="M856 491v10l2.300-2 1.700 3.700 1.700-.7-1.600-3.700h3z" fill="#fff" stroke="#222" strokeWidth=".7" />
      <text
        x="1249"
        y="667.500"
        fontFamily="'DejaVu Sans', sans-serif"
        fontSize="18.500"
        fill="#76ab1c"
        stroke="#76ab1c"
        strokeWidth=".5"
        textLength="24"
        lengthAdjust="spacingAndGlyphs"
      >
        55
      </text>
    </svg>
  );
}

function ViewToolbar() {
  const cell = "flex w-[18.200px] items-center justify-center border-r border-[#d3d4d7]";
  return (
    <div className="absolute top-[5px] left-[466px] flex h-[18px] w-[189px] border border-[#d0d1d4] bg-[#fbfbfb]">
      <div className="w-[4px] border-r border-[#c5c6c9] bg-[#e3e4e7]" />
      <div className={cell}>
        <svg width="11" height="12" viewBox="0 0 11 12">
          <path d="M1 1h9v9.500H1z" fill="none" stroke="#8e9194" strokeWidth=".8" />
          <circle cx="5.500" cy="5.500" r="2.700" fill="#d4eef7" stroke="#347c9a" />
          <path d="M7.500 7.500l2.500 3" stroke="#555" strokeWidth="1.300" />
        </svg>
      </div>
      {["M2.800 4.500h4M4.800 2.500v4", "M2.800 4.500h4"].map((d) => (
        <div key={d} className={cell}>
          <svg width="11" height="12" viewBox="0 0 11 12">
            <circle cx="4.800" cy="4.500" r="3.500" fill="#d4eef7" stroke="#5e9bb3" />
            <path d={d} stroke="#17506a" strokeWidth="1.400" />
            <path d="M7.500 7l2.800 3.500" stroke="#8b7c68" strokeWidth="1.500" />
          </svg>
        </div>
      ))}
      <div className={cell}>
        <svg width="11" height="11" viewBox="0 0 11 11">
          <path d="M.5.5h10v10H.5z" fill="#e7f5f9" stroke="#9db7c0" strokeWidth=".7" />
          <path d="M10.500.5v10H1C6 9.500 9 6 10.500.5z" fill="#1f6f91" />
          <path d="M1 1h9L1 9z" fill="#8cc9de" opacity=".6" />
        </svg>
      </div>
      <div className={cell}>
        <svg width="14" height="13" viewBox="0 0 14 13">
          <path d="M1 4l2.500-3h8v7.500L9 11.500H1z" fill="#a9dcec" stroke="#2c5d72" strokeWidth=".9" />
          <path d="M1 4h8v7.500H1zM9 4l2.500-3" fill="#eaf7fb" stroke="#2c5d72" strokeWidth=".9" />
          <path d="M13.500 10v2.500H11z" fill="#444" />
        </svg>
      </div>
      <div className={cell}>
        <svg width="14" height="13" viewBox="0 0 14 13">
          <path d="M1 3.500L3 1h8v8l-2 2.500H1z" fill="#d7eef6" stroke="#7ba8b8" strokeWidth=".8" />
          <path d="M1 3.500h8v8H1z" fill="#f6fbfd" stroke="#7ba8b8" strokeWidth=".6" />
          <path d="M6.500 5.500h5.500v6H6.500z" fill="#eef0f1" stroke="#999" strokeWidth=".6" />
          <path d="M13.500 10v2.500H11z" fill="#444" />
        </svg>
      </div>
      <div className={cell}>
        <svg width="12" height="12" viewBox="0 0 12 12">
          <path d="M1 1h9v9H1zM1 3.500h9M1 6h9M3.500 1v9" fill="none" stroke="#8e9093" strokeWidth=".8" />
          <path d="M5 6.500h2l.7-1h2l.7 1H12V11H5z" fill="#26282b" />
          <circle cx="8.600" cy="8.700" r="1.200" fill="#bbb" />
        </svg>
      </div>
      <div className={cell}>
        <svg width="14" height="13" viewBox="0 0 14 13">
          <path d="M1 1l3 3M4 1L1 4M2 11.500L8 1M8 6v5M5.500 7.500l5 4M10.500 7l-5 4.500M9 3l3 3M12 3L9 6" fill="none" stroke="#7a6338" strokeWidth=".9" />
          <path d="M13.500 10v2.500H11z" fill="#444" />
        </svg>
      </div>
      <div className={`${cell} border border-[#9c9da1] bg-[#dfe0e4]`}>
        <svg width="13" height="12" viewBox="0 0 13 12">
          <path d="M.8 1h7v4h-7z" fill="#fff" stroke="#8e9093" strokeWidth=".8" />
          <path d="M7.800 3h2.500v3.500M9 5.500l1.300 1.500 1.300-1.500" fill="none" stroke="#444" strokeWidth=".8" />
          <path d="M6 9.500c1.500-2 5-2 6.500 0-1.500 2-5 2-6.500 0z" fill="#ccc" stroke="#333" strokeWidth=".8" />
          <circle cx="9.200" cy="9.500" r="1.100" fill="#222" />
        </svg>
      </div>
      <div className={cell}>
        <svg width="12" height="12" viewBox="0 0 12 12">
          <path d="M2.500 2.500L5.500 6l-3 3.500M5.500 6h4" fill="none" stroke="#4a4c50" strokeWidth="1" />
          <circle cx="2.300" cy="2.200" r="1.500" fill="#2e9147" />
          <circle cx="2.300" cy="9.800" r="1.500" fill="#2479a0" />
          <circle cx="10" cy="6" r="1.600" fill="#c23a52" />
        </svg>
      </div>
      <div className="flex-1 bg-[#e3e4e7]" />
    </div>
  );
}

function StatusBar() {
  return (
    <div className="flex h-[23px] shrink-0 items-center border-t-2 border-b border-[#a9aaad] border-b-[#c9cacd] bg-[#edeef1] pl-[4px] text-[7.3px] text-[#55575b]">
      <div className="flex h-[15px] w-[15px] items-center justify-center border border-[#9fa0a3] bg-[#e4e5e8]"><TreeGlyph /></div>
      <div className="ml-[2px] flex h-[15px] w-[15px] items-center justify-center border border-[#c3c4c7] bg-[#f7f7f8]">
        <svg width="12" height="12" viewBox="0 0 12 12">
          <circle cx="6.200" cy="5.800" r="4.600" fill="#2f97c4" />
          <path d="M4 3c2-1 3 0 2 2S3 6 3 7M7 8l2-2" stroke="#9fd6ea" strokeWidth="1" fill="none" />
          <path d="M1.500 11c-2-2 .5-5 1.500-6M9 10c-2 1.500-5 2.500-7.500 1" fill="none" stroke="#4b6876" strokeWidth=".9" />
        </svg>
      </div>
      <div className="ml-[6px] h-[17px] w-px bg-[#d9dadd]" />
      <div className="ml-[5px] h-[3px] w-[3px] rounded-full bg-[#1d4f74]" />
      <div className="ml-[3.500px]">Regenerierungssicherung wurde gespeichert.</div>
      <div className="ml-auto flex h-full items-center pr-[12px]">
        <div className="h-[17px] w-[20px] border-l border-[#dcdde0]" />
        <div className="flex h-[17px] w-[25px] items-center justify-center gap-[1.500px] border-l border-[#dcdde0]">
          <i className="h-[4px] w-[4px] rounded-full bg-[#c3c4c7]" />
          <i className="h-[7px] w-[7px] rounded-full bg-[#f2f20c]" />
          <i className="h-[4px] w-[4px] rounded-full bg-[#c3c4c7]" />
        </div>
        <div className="flex h-[17px] w-[26px] items-center border-l border-[#dcdde0] pl-[2px]">
          <svg width="9" height="11" viewBox="0 0 9 11">
            <path d="M1.200 0v11" stroke="#9fa1a4" strokeWidth="1.200" />
            <path d="M1.200 1L8.500 3 1.200 6.500z" fill="#a7a9ac" />
          </svg>
        </div>
        <div className="flex h-[17px] w-[31px] items-center border-x border-[#dcdde0] pl-[2px]">
          <div className="flex h-[16px] w-[27px] items-center justify-center rounded-[2px] border border-[#b4b5b8] bg-[#e9eaed]">
            <svg width="12" height="11" viewBox="0 0 12 11">
              <path d="M2.500 1h2v2h3V1h2l2 6v3.500H7V6H5v4.500H.5V7z" fill="#2e3033" />
              <path d="M2 7.500h1.500V9H2zM8.500 7.500H10V9H8.500z" fill="#aaa" />
            </svg>
          </div>
        </div>
        <div className="ml-[65px] flex h-[14px] w-[103px] items-center border border-[#b4b5b8] bg-[#f8f8f9] pl-[5px]">
          <span>Smart</span>
          <span className="ml-auto flex h-full w-[9px] items-center justify-center border-l border-[#b4b5b8]"><Caret size={4} /></span>
        </div>
      </div>
    </div>
  );
}

const apps: { running?: boolean; active?: boolean; art: React.ReactNode }[] = [
  { art: <path d="M2 3.500l5.200-.8v4.900H2zM8 2.600l6-.9v5.900H8zM2 8.300h5.200v4.900L2 12.400zM8 8.300h6v5.900l-6-.9z" fill="#fff" /> },
  { art: <circle cx="8" cy="8" r="4.800" fill="none" stroke="#fff" strokeWidth="1.300" /> },
  { art: <path d="M4 3.500h8v9H4zM2.500 4.500H1v7h1.500M13.500 4.500H15v7h-1.500" fill="none" stroke="#e8e8e8" strokeWidth=".9" /> },
  {
    running: true,
    art: (
      <g>
        <path d="M1 2h5l1 1.500h8V14H1z" fill="#f6dc84" />
        <path d="M3.500 8h9v6h-2.500v-3H6v3H3.500z" fill="#3e9ed8" />
      </g>
    ),
  },
  {
    running: true,
    art: (
      <g>
        <circle cx="8" cy="8" r="6.800" fill="#f5f1f8" stroke="#c58fcf" strokeWidth=".8" />
        <path d="M6.500 10.500V5l4-1v5.500" fill="none" stroke="#d4357e" strokeWidth="1.200" />
        <circle cx="5.600" cy="10.700" r="1.300" fill="#7a54d6" />
        <circle cx="9.600" cy="9.700" r="1.300" fill="#d4357e" />
      </g>
    ),
  },
  {
    running: true,
    art: (
      <g>
        <circle cx="8" cy="8" r="7" fill="#2da14b" />
        <path d="M8 8L1.900 4.500A7 7 0 0 1 14.100 4.500z" fill="#e0412f" />
        <path d="M8 8l6.100-3.500A7 7 0 0 1 8 15z" fill="#fbcb1c" />
        <path d="M8 4.700h6.200" stroke="#e0412f" strokeWidth="1" />
        <circle cx="8" cy="8" r="3.300" fill="#fff" />
        <circle cx="8" cy="8" r="2.500" fill="#3f83ee" />
      </g>
    ),
  },
  {
    art: (
      <g>
        <circle cx="8.300" cy="8" r="6.800" fill="#ff8a16" />
        <circle cx="8.500" cy="7" r="4.600" fill="#2d4aa0" />
        <path d="M1.200 6C2 3 4 2 4.500 3.500c2-.5 3 1 5 2-2 1-3.500 1-3 3 1.500 2 4 2 6 0 1 3-2.500 6-6 5.500S.5 10 1.200 6z" fill="#f3452b" />
        <path d="M10 1c4 2 5.500 5 4.500 9-1 3-3 4-4 4.500 2-3 3-8-.5-13.500z" fill="#ffcb2d" />
      </g>
    ),
  },
  {
    art: (
      <g fill="none" stroke="#fff">
        <circle cx="8" cy="8" r="3.700" strokeWidth="1.700" />
        <path d="M8 1.800v2M8 12.200v2M1.800 8h2M12.200 8h2M3.600 3.600L5 5M11 11l1.400 1.400M12.400 3.600L11 5M5 11l-1.400 1.400" strokeWidth="1.900" />
      </g>
    ),
  },
  {
    art: (
      <g>
        <path d="M1 5c1-4 6-3 7-2 3-2 7-1 6 2-1 2 0 4-1 6-2 4-7 5-9 3-3-3-2-6-3-9z" fill="#a6acb1" />
        <circle cx="5.500" cy="5.500" r="3" fill="#c3c8cc" />
        <circle cx="6" cy="6" r="1.500" fill="#9ea5aa" />
        <circle cx="9" cy="10" r="2.800" fill="#868e94" />
      </g>
    ),
  },
  {
    art: (
      <g>
        <ellipse cx="8" cy="6" rx="7.500" ry="4.200" transform="rotate(-18 8 6)" fill="#e9dfe1" stroke="#b96a74" strokeWidth="1" />
        <path d="M8 7l5 6M13 7l-4 6" stroke="#7ea9c8" strokeWidth="1.300" />
        <circle cx="8.500" cy="13" r="1.500" fill="none" stroke="#3a7fb5" />
        <circle cx="13" cy="12.500" r="1.500" fill="none" stroke="#3a7fb5" />
      </g>
    ),
  },
  {
    running: true,
    art: (
      <g>
        <path d="M1.500 2l12-.5 1 8-12 .8z" fill="#dfe7ec" stroke="#8b979f" strokeWidth=".8" />
        <path d="M3 7l2-2 2 2 2-3 3 3" fill="none" stroke="#3c8c52" strokeWidth="1" />
        <path d="M5 11l8-1 1 3-9 1z" fill="#a8b4bc" />
      </g>
    ),
  },
  {
    running: true,
    art: (
      <g>
        <path d="M6 1.500l8.500 1-2.500 11L1.500 12z" fill="#6fb4bf" />
        <path d="M6 1.500l8.500 1-1 4L4 9z" fill="#b5dde2" />
        <path d="M1.500 12l10.500 1.500.5-2" fill="none" stroke="#e7f2f3" strokeWidth="1" />
      </g>
    ),
  },
  {
    running: true,
    art: (
      <g>
        <path d="M0 0h16v16H0z" fill="#fbdcbb" />
        <path d="M4.500 2h6v2.200H9v7h1.500v2.300h-6v-2.300H6v-7H4.500z" fill="#a8683a" />
        <path d="M9 14h1.500M11.500 14H13M14 14h1.500" stroke="#e0671b" strokeWidth="1.300" />
      </g>
    ),
  },
  {
    running: true,
    active: true,
    art: (
      <g>
        <path d="M0 0h15v15H0z" fill="#f4f6f7" />
        <path d="M2 2h11v10H2z" fill="#fff" stroke="#777" strokeWidth="1" />
        <path d="M4.500 3.500H12V10H4.500z" fill="#1f8fca" />
        <path d="M11.500 7l5 9h-10z" fill="#fcc419" />
        <path d="M11.500 10v3M11.500 14v1" stroke="#222" strokeWidth="1.200" />
      </g>
    ),
  },
];

function Taskbar() {
  return (
    <div className="flex h-[26px] shrink-0 items-stretch bg-black">
      <div className="flex w-[457px] shrink-0 items-stretch">
        {apps.map((a, i) => (
          <div key={i} className="flex w-[32.640px] shrink-0 flex-col items-center justify-end">
            <div className={`flex w-[31px] flex-1 items-center justify-center ${a.active ? "bg-[#343638]" : ""}`}>
              <svg width="15" height="15" viewBox="0 0 16 16" className="overflow-visible">{a.art}</svg>
            </div>
            <div className={`h-[2px] ${a.active ? "w-[31px]" : "w-[27px]"} ${a.running ? "bg-[#76b0dd]" : ""}`} />
          </div>
        ))}
      </div>
      <div className="ml-auto flex items-center font-['Open_Sans','Noto_Sans',sans-serif] text-[7.3px] text-[#f0f0f0]">
        <svg width="12" height="12" viewBox="0 0 12 12">
          <g fill="none" stroke="#fff" strokeWidth=".9">
            <circle cx="8.200" cy="2.700" r="1.900" />
            <circle cx="4" cy="5.800" r="1.700" />
            <path d="M1 11.500c0-5 6-5 6 0M6.500 6c2-2 5-.5 5 2.500" />
          </g>
        </svg>
        <svg width="9" height="6" viewBox="0 0 9 6" className="ml-[13px]">
          <path d="M.5 5l4-4 4 4" fill="none" stroke="#fff" strokeWidth="1" />
        </svg>
        <svg width="11" height="10" viewBox="0 0 11 10" className="ml-[6px]">
          <path d="M.5 3.500h2L5 1v8L2.500 6.500h-2zM6.500 3.500c.8 1 .8 2 0 3M8 2c1.500 2 1.500 4 0 6M9.500 1c2 2.500 2 5.500 0 8" fill="none" stroke="#eee" strokeWidth=".8" />
        </svg>
        <svg width="10" height="9" viewBox="0 0 10 9" className="ml-[6px]">
          <path d="M2.700 0L5 1.700 2.700 3.300.4 1.700zM7.300 0l2.300 1.700-2.300 1.600L5 1.700zM2.700 3.400L5 5 2.700 6.600.4 5zM7.300 3.400L9.600 5 7.300 6.600 5 5zM5 5.700l2.200 1.500L5 8.700 2.800 7.200z" fill="#fff" />
        </svg>
        <span className="ml-[8px] w-[16px] pb-[1px]">DEU</span>
        <div className="ml-[7px] w-[37px] pb-[2px] text-center text-[7.100px] leading-[11.500px] whitespace-nowrap">
          <div>07:38</div>
          <div>11.05.2018</div>
        </div>
        <svg width="18" height="17" viewBox="0 0 18 17" className="mr-[7px] ml-[10px]">
          <path d="M1 2h11v9H6l-2.500 2.500V11H1z" fill="#fff" />
          <path d="M3 4.500h7M3 6.500h7M3 8.500h5" stroke="#222" strokeWidth=".8" />
          <circle cx="11.500" cy="10.800" r="5" fill="#35383b" stroke="#9a9a9a" strokeWidth=".7" />
          <text x="11.500" y="13.600" fontSize="8" textAnchor="middle" fill="#fff">4</text>
        </svg>
        <div className="mr-[2px] h-[26px] w-px bg-[#4a4a4a]" />
      </div>
    </div>
  );
}

export default function App() {
  return (
    <div className="flex h-[720px] w-[1280px] flex-col overflow-hidden bg-[#fbfbfb] font-['Liberation_Sans',Arial,sans-serif]">
      <TitleBar />
      <TabRow />
      <Ribbon />
      <div className="flex h-[561px] shrink-0">
        <ModelTree />
        <div className="relative w-[1120px] shrink-0">
          <Scene />
          <ViewToolbar />
        </div>
      </div>
      <StatusBar />
      <Taskbar />
    </div>
  );
}
